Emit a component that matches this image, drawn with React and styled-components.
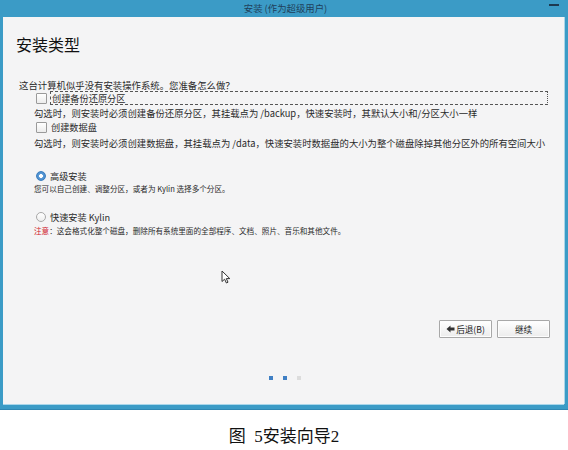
import React from 'react'
import styled, { createGlobalStyle } from 'styled-components'

const Global = createGlobalStyle`
  html, body {
    margin: 0;
    padding: 0;
    background: #ffffff;
  }
  body {
    font-family: "Noto Sans CJK SC", "Noto Sans", sans-serif;
    color: #222;
  }
`

const App = () => {
  return (
    <Page>
      <Global />
      <Window>
        <TitleBar>
          <TitleText>安装 (作为超级用户)</TitleText>
          <Minimize />
        </TitleBar>
        <Body>
          <Heading>安装类型</Heading>
          <Question>这台计算机似乎没有安装操作系统。您准备怎么做？</Question>

          <CheckRow $top={0}>
            <CheckBox />
            <FocusLabel>创建备份还原分区</FocusLabel>
          </CheckRow>
          <Hint $top={2}>
            勾选时，则安装时必须创建备份还原分区，其挂载点为 /backup，快速安装时，其默认大小和/分区大小一样
          </Hint>
          <CheckRow $top={1}>
            <CheckBox />
            <Label>创建数据盘</Label>
          </CheckRow>
          <Hint $top={3}>
            勾选时，则安装时必须创建数据盘，其挂载点为 /data，快速安装时数据盘的大小为整个磁盘除掉其他分区外的所有空间大小
          </Hint>

          <RadioRow $top={20}>
            <Radio $checked />
            <Label>高级安装</Label>
          </RadioRow>
          <Note $top={1}>您可以自己创建、调整分区，或者为 Kylin 选择多个分区。</Note>
          <RadioRow $top={16}>
            <Radio />
            <Label>快速安装 Kylin</Label>
          </RadioRow>
          <Note $top={2}>
            <Warn>注意</Warn>：这会格式化整个磁盘，删除所有系统里面的全部程序、文档、照片、音乐和其他文件。
          </Note>

          <Buttons>
            <Button>
              <svg width="9" height="8" viewBox="0 0 9 8">
                <path d="M0.5 4 L4.5 0.5 L4.5 2.5 L8.5 2.5 L8.5 5.5 L4.5 5.5 L4.5 7.5 Z" fill="#333" />
              </svg>
              后退(B)
            </Button>
            <Button>继续</Button>
          </Buttons>

          <Dots>
            <Dot $on />
            <Dot $on />
            <Dot />
          </Dots>

          <Pointer width="10" height="14" viewBox="0 0 10 14">
            <path d="M1 1 L1 11.5 L3.6 9.2 L5.4 13 L7 12.2 L5.3 8.6 L8.8 8.6 Z" fill="#fff" stroke="#333" strokeWidth="1" strokeLinejoin="round" />
          </Pointer>
        </Body>
      </Window>
      <Caption>图&nbsp;&nbsp;5安装向导2</Caption>
    </Page>
  )
}

export default App

const Page = styled.div`
  width: 568px;
  height: 450px;
  display: flex;
  flex-direction: column;
  overflow: hidden;
`

const Window = styled.div`
  width: 568px;
  height: 410px;
  box-sizing: border-box;
  background: #3b9bc6;
  padding: 0 4px 5px 3px;
  display: flex;
  flex-direction: column;
  border-bottom: 1px solid #2f86b2;
`

const TitleBar = styled.div`
  height: 17px;
  position: relative;
  display: flex;
  align-items: center;
  justify-content: center;
`

const TitleText = styled.div`
  font-size: 9.4px;
  line-height: 17px;
  color: #1f3f5a;
  padding-left: 4px;
`

const Minimize = styled.span`
  position: absolute;
  right: 5px;
  top: 4px;
  width: 10px;
  height: 2px;
  background: #1d3950;
`

const Body = styled.div`
  position: relative;
  flex: 1;
  background: #f4f4f5;
  box-shadow: 0 1px 0 #a9d6ea, 1px 0 0 #a9d6ea;
  padding: 17px 14px 24px 13px;
  display: flex;
  flex-direction: column;
  box-sizing: border-box;
`

const Heading = styled.div`
  font-size: 16px;
  line-height: 20px;
  color: #111;
`

const Question = styled.div`
  margin: 25px 0 0 3px;
  font-size: 9.4px;
  line-height: 12px;
  color: #2a2a2a;
`

const CheckRow = styled.div`
  margin: ${p => p.$top}px 0 0 20px;
  height: 14px;
  display: flex;
  align-items: center;
  gap: 3px;
`

const RadioRow = styled(CheckRow)``

const CheckBox = styled.span`
  width: 9px;
  height: 9px;
  border: 1px solid #9a9a9a;
  border-radius: 1px;
  background: linear-gradient(#ffffff, #ececec);
  flex-shrink: 0;
`

const Radio = styled.span`
  width: 10px;
  height: 10px;
  border-radius: 50%;
  flex-shrink: 0;
  box-sizing: border-box;
  border: 1px solid ${p => (p.$checked ? '#3c7fc0' : '#a8a8a8')};
  background: ${p =>
    p.$checked
      ? 'radial-gradient(circle, #ffffff 0 1.6px, #5a9ad6 2.2px, #3f82c6 100%)'
      : 'linear-gradient(#ffffff, #eeeeee)'};
`

const Label = styled.span`
  font-size: 9.2px;
  line-height: 14px;
  color: #2a2a2a;
  padding-left: 1px;
`

const FocusLabel = styled(Label)`
  flex: 1;
  margin-right: 2px;
  border: 1px dashed #555;
  border-right-style: dotted;
  height: 14px;
  line-height: 12px;
  box-sizing: border-box;
  padding-left: 1px;
`

const Hint = styled.div`
  margin: ${p => p.$top}px 0 0 18px;
  font-size: 9.35px;
  line-height: 12px;
  color: #2a2a2a;
  white-space: nowrap;
`

const Note = styled.div`
  margin: ${p => p.$top}px 0 0 18px;
  font-size: 7.6px;
  line-height: 10px;
  color: #2a2a2a;
  white-space: nowrap;
`

const Warn = styled.span`
  color: #d0202a;
`

const Buttons = styled.div`
  margin-top: auto;
  display: flex;
  justify-content: flex-end;
  gap: 5px;
`

const Button = styled.div`
  width: 53px;
  height: 18px;
  box-sizing: border-box;
  border: 1px solid #a8a8a8;
  border-radius: 1px;
  background: linear-gradient(#ffffff, #ececec);
  box-shadow: inset 0 0 0 1px #fdfdfd;
  font-size: 8.6px;
  color: #222;
  display: flex;
  align-items: center;
  justify-content: center;
  gap: 1px;
`

const Dots = styled.div`
  margin-top: 38px;
  display: flex;
  justify-content: center;
  gap: 10px;
  padding-left: 4px;
`

const Dot = styled.span`
  width: 4px;
  height: 4px;
  background: ${p => (p.$on ? '#3f7fc4' : '#dcdcdc')};
`

const Pointer = styled.svg`
  position: absolute;
  left: 218px;
  top: 253px;
`

const Caption = styled.div`
  flex: 1;
  display: flex;
  align-items: center;
  justify-content: center;
  padding-top: 8px;
  font-family: "Liberation Serif", "Noto Sans CJK SC", serif;
  font-size: 17px;
  color: #111;
`
